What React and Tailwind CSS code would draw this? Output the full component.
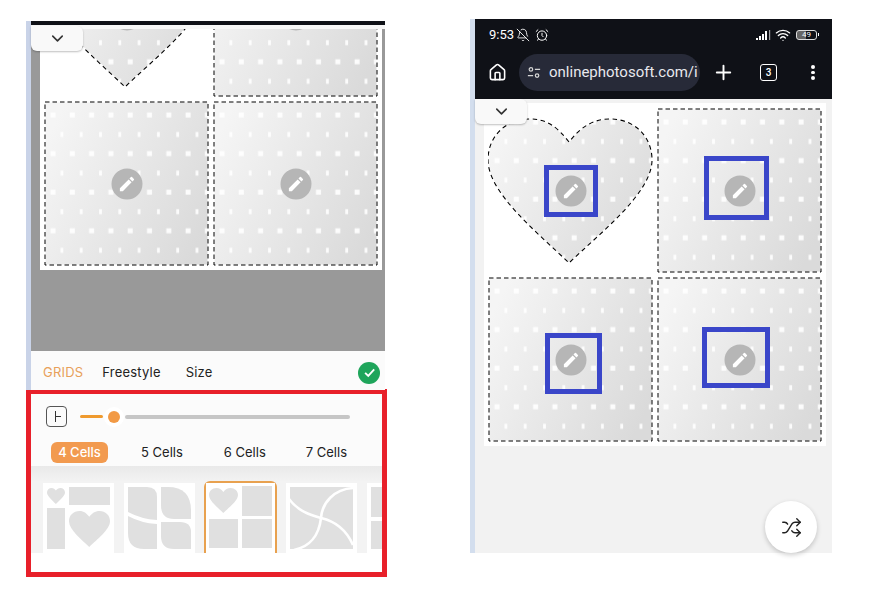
import React from 'react';
import { ChevronDown, House, Plus, Shuffle, BellOff, AlarmClock, Wifi } from 'lucide-react';

const HEART = 'M81 34C70 20 60 11 42 11C18 11 0 28 0 52C0 85 50 125 81 155C112 125 164 85 164 52C164 28 146 11 122 11C104 11 92 20 81 34Z';

const Pencil = () => (
  <div className="absolute left-1/2 top-1/2 flex h-[31px] w-[31px] -translate-x-1/2 -translate-y-1/2 items-center justify-center rounded-full bg-[#b6b6b6]">
    <svg viewBox="0 0 24 24" className="h-[19px] w-[19px] fill-white">
      <path d="M3 17.25V21h3.75L17.81 9.94l-3.75-3.75L3 17.25zM20.71 7.04a1 1 0 0 0 0-1.41l-2.34-2.34a1 1 0 0 0-1.41 0l-1.83 1.83 3.75 3.75 1.83-1.83z" />
    </svg>
  </div>
);

const CellArt = ({ id, heart }) => (
  <svg viewBox="0 0 165 165" className="h-[165px] w-[165px]">
    <defs>
      <linearGradient id={`grad-${id}`} x1="0" y1="0.25" x2="1" y2="0.75">
        <stop offset="0" stopColor="#f5f5f5" />
        <stop offset="1" stopColor="#dadada" />
      </linearGradient>
      <pattern id={`dots-${id}`} width="19.3" height="38.6" patternUnits="userSpaceOnUse">
        <rect x="6.5" y="11.5" width="5" height="5" fill="#fff" fillOpacity="0.9" />
        <rect x="16.5" y="31" width="5" height="5" fill="#fff" fillOpacity="0.9" />
      </pattern>
    </defs>
    {heart ? (
      <>
        <path d={HEART} fill={`url(#grad-${id})`} stroke="#fff" strokeWidth="1.2" />
        <path d={HEART} fill={`url(#dots-${id})`} stroke="#000" strokeWidth="1.1" strokeDasharray="4.5 3.5" />
      </>
    ) : (
      <>
        <rect x="1" y="1" width="163" height="163" fill={`url(#grad-${id})`} stroke="#fff" strokeWidth="1" />
        <rect x="1" y="1" width="163" height="163" fill={`url(#dots-${id})`} stroke="#000" strokeWidth="1" strokeDasharray="4.5 3" />
      </>
    )}
  </svg>
);

const Cell = ({ id, heart, mark }) => (
  <div className="relative h-[165px] w-[165px]">
    <CellArt id={id} heart={heart} />
    <Pencil />
    {mark}
  </div>
);

const Collage = ({ name, marks = [] }) => (
  <div className="grid w-[342px] grid-cols-[165px_165px] gap-1 bg-white px-1 pb-1 pt-[5px]">
    <Cell id={`${name}-a`} heart mark={marks[0]} />
    <Cell id={`${name}-b`} mark={marks[1]} />
    <Cell id={`${name}-c`} mark={marks[2]} />
    <Cell id={`${name}-d`} mark={marks[3]} />
  </div>
);

const ChevronTab = ({ className }) => (
  <div className={`absolute left-0 flex w-[52px] items-center justify-center rounded-b-md rounded-tr-md bg-[#f9f9f9] shadow-[0_1px_2px_rgba(0,0,0,0.25)] ${className}`}>
    <ChevronDown className="h-[19px] w-[19px] text-[#333]" strokeWidth={2} />
  </div>
);

const HeartIn = ({ x, y, w, h }) => (
  <path d={HEART} transform={`translate(${x} ${y}) scale(${w / 164} ${h / 144}) translate(0 -11)`} fill="#e0e0e0" />
);

const Thumb1 = () => (
  <svg viewBox="0 0 71 70" className="h-[70px] w-[71px] shrink-0 bg-white fill-[#e0e0e0]">
    <HeartIn x={4} y={5} w={18} h={16} />
    <rect x="26" y="4" width="41" height="18" />
    <rect x="4" y="25" width="18" height="41" />
    <HeartIn x={26} y={28} w={41} h={36} />
  </svg>
);

const Thumb2 = () => (
  <svg viewBox="0 0 71 70" className="h-[70px] w-[71px] shrink-0 bg-white fill-[#e0e0e0]">
    <path d="M4 4H23Q33 4 33 14V37Q17 36 4 29Z" />
    <path d="M4 33Q17 40 33 41V66H20Q4 66 4 50Z" />
    <path d="M37 4H44Q67 4 67 28V36H50Q37 36 37 22Z" />
    <path d="M37 39H56Q67 39 67 49V66H50Q37 66 37 53Z" />
  </svg>
);

const Thumb3 = () => (
  <div className="-mx-px -mt-0.5 h-[72px] w-[73px] shrink-0 rounded-t-md border-x-2 border-t-2 border-[#e8a14f]">
    <svg viewBox="0 0 69 70" className="h-[70px] w-[69px] bg-white fill-[#e0e0e0]">
      <HeartIn x={3} y={5} w={29} h={25} />
      <rect x="36" y="3" width="30" height="30" />
      <rect x="3" y="36" width="29" height="29" />
      <rect x="36" y="36" width="30" height="29" />
    </svg>
  </div>
);

const Thumb4 = () => (
  <svg viewBox="0 0 71 70" className="h-[70px] w-[71px] shrink-0 bg-white">
    <rect x="4" y="4" width="63" height="62" fill="#e0e0e0" />
    <g fill="none" stroke="#fff" strokeWidth="2.6">
      <path d="M3 16C12 28 24 32 35 35C48 38 60 46 67 62" />
      <path d="M67 5C48 6 36 20 35 35C33 52 24 64 8 67" />
    </g>
  </svg>
);

const Thumb5 = () => (
  <svg viewBox="0 0 71 70" className="h-[70px] w-[71px] shrink-0 bg-white fill-[#e0e0e0]">
    <rect x="4" y="4" width="63" height="30" />
    <rect x="4" y="38" width="63" height="28" />
  </svg>
);

const LeftPhone = () => (
  <div className="ml-[26px] mt-[21px] w-[361px] font-['Inter',sans-serif]">
    <div className="-mb-px flex h-[369px] w-[359px]">
      <div className="w-[5px] bg-[#c9d3e8]" />
      <div className="flex w-[354px] flex-col">
        <div className="h-1 bg-[#0f1117]" />
        <div className="relative flex h-[326px] flex-col">
          <div className="h-1 bg-[#f7f7f7]" />
          <div className="flex-1 overflow-hidden bg-[#999999] pl-[9px]">
            <div className="-mt-[102px]">
              <Collage name="left" />
            </div>
          </div>
          <ChevronTab className="top-px h-[25px]" />
        </div>
        <div className="flex h-[39px] items-center bg-[#fbfbfb] pl-3 pr-[5px] pt-1 text-[13px] tracking-[0.2px] text-[#222]">
          <span className="text-[#e8a05a]">GRIDS</span>
          <span className="ml-[19px]">Freestyle</span>
          <span className="ml-[25px]">Size</span>
          <span className="ml-auto flex h-[22px] w-[22px] items-center justify-center rounded-full bg-[#1fa55b]">
            <svg viewBox="0 0 24 24" className="h-[15px] w-[15px] fill-none stroke-white stroke-[3]">
              <path d="M5 12.5l5 5L19.5 7" />
            </svg>
          </span>
        </div>
      </div>
    </div>
    <div className="h-[188px] w-[361px] border-[5px] border-[#e8202a] bg-white">
      <div className="flex h-[45px] items-center bg-[#fbfbfb] pl-[15px]">
        <div className="relative h-[21px] w-[21px] rounded-[4px] border border-[#555]">
          <span className="absolute left-[8px] top-[4px] h-[11px] w-px bg-[#333]" />
          <span className="absolute left-[8px] top-[9px] h-px w-[6px] bg-[#333]" />
        </div>
        <div className="ml-[13px] h-[3px] w-[23px] rounded-full bg-[#ef9a2e]" />
        <div className="ml-[5px] h-3 w-3 rounded-full bg-[#f29a45] shadow-[0_0_0_4px_#ffffff]" />
        <div className="ml-[5px] h-1 w-[225px] rounded-full bg-[#c6c6c6]" />
      </div>
      <div className="flex h-[27px] items-center bg-[#fbfbfb] text-[13px] text-[#222]">
        <span className="ml-5 flex h-[21px] w-[57px] items-center justify-center rounded-md bg-[#f29a4f] font-medium text-white">4 Cells</span>
        <span className="ml-[33px]">5 Cells</span>
        <span className="ml-[41px]">6 Cells</span>
        <span className="ml-[40px]">7 Cells</span>
      </div>
      <div className="flex h-[87px] gap-2.5 overflow-hidden bg-[linear-gradient(#e9e9e9,#f3f3f3_16px)] pl-3 pt-[17px]">
        <Thumb1 />
        <Thumb2 />
        <Thumb3 />
        <Thumb4 />
        <Thumb5 />
      </div>
    </div>
  </div>
);

const Mark = ({ className }) => <div className={`absolute border-[5px] border-[#3a46c9] ${className}`} />;

const RightPhone = () => (
  <div className="ml-[83px] mt-[19px] flex h-[534px] w-[362px] font-['Roboto',sans-serif]">
    <div className="w-[5px] bg-[#d3deee]" />
    <div className="flex w-[357px] flex-col">
      <div className="h-[80px] bg-[#0f1117] text-white">
        <div className="flex h-[30px] items-center pl-[14px] pr-[13px] pt-[1px]">
          <span className="text-[13px] leading-none">9:53</span>
          <BellOff className="ml-[2px] h-[14px] w-[14px]" strokeWidth={1.5} />
          <AlarmClock className="ml-[5px] h-[14px] w-[14px]" strokeWidth={1.7} />
          <svg viewBox="0 0 16 10" className="ml-auto h-2.5 w-4 fill-white">
            <rect x="0" y="8" width="2" height="2" />
            <rect x="3" y="6" width="2" height="4" />
            <rect x="6" y="4" width="2" height="6" />
            <rect x="9" y="1" width="2" height="9" />
            <rect x="13" y="0" width="1.2" height="10" fillOpacity="0.6" />
          </svg>
          <Wifi className="ml-[3px] h-4 w-4" strokeWidth={2} />
          <span className="ml-[5px] flex h-[10px] w-[21px] items-center justify-center rounded-[3px] border border-[#ddd] bg-[linear-gradient(90deg,#666_50%,#0f1117_50%)] text-[8px] leading-none text-white">49</span>
          <span className="ml-px h-[3px] w-px bg-white" />
        </div>
        <div className="flex h-[50px] items-center pb-[3px] pl-[13px]">
          <House className="h-[19px] w-[19px]" strokeWidth={2} />
          <div className="ml-[12px] flex h-[37px] w-[181px] items-center overflow-hidden rounded-full bg-[#272a38] pl-2">
            <svg viewBox="0 0 16 14" className="h-[13px] w-[14px] fill-none stroke-[#d5d5d5] stroke-[1.4]">
              <circle cx="4.5" cy="3.5" r="2" />
              <path d="M9 3.5h6M1 10.5h6" />
              <circle cx="11.5" cy="10.5" r="2" />
            </svg>
            <span className="ml-[8px] text-[15px] leading-none text-[#e8e8ee]">onlinephotosoft.com/i</span>
          </div>
          <Plus className="ml-[12px] h-[23px] w-[23px]" strokeWidth={2} />
          <span className="ml-[25px] flex h-[17px] w-[17px] items-center justify-center rounded-[3px] border-[1.5px] border-white text-[10px] font-medium">3</span>
          <span className="ml-[34px] flex flex-col gap-[2px]">
            <i className="h-[3.5px] w-[3.5px] rounded-full bg-white" />
            <i className="h-[3.5px] w-[3.5px] rounded-full bg-white" />
            <i className="h-[3.5px] w-[3.5px] rounded-full bg-white" />
          </span>
        </div>
      </div>
      <div className="relative flex-1 bg-[#f2f2f2] pl-[9px] pt-1">
        <Collage
          name="right"
          marks={[
            <Mark key="a" className="left-[56px] top-[57px] h-[52px] w-[54px]" />,
            <Mark key="b" className="left-[47px] top-[48px] h-[64px] w-[65px]" />,
            <Mark key="c" className="left-[57px] top-[56px] h-[61px] w-[57px]" />,
            <Mark key="d" className="left-[45px] top-[50px] h-[61px] w-[68px]" />,
          ]}
        />
        <ChevronTab className="top-0 h-[25px]" />
        <div className="absolute bottom-0 right-[15px] flex h-[52px] w-[52px] items-center justify-center rounded-full bg-white shadow-[0_2px_5px_rgba(0,0,0,0.2)]">
          <Shuffle className="h-[21px] w-[21px] text-[#222]" strokeWidth={1.6} />
        </div>
      </div>
    </div>
  </div>
);

const App = () => (
  <div className="flex h-[609px] w-[873px] items-start overflow-hidden bg-white">
    <LeftPhone />
    <RightPhone />
  </div>
);

export default App;
